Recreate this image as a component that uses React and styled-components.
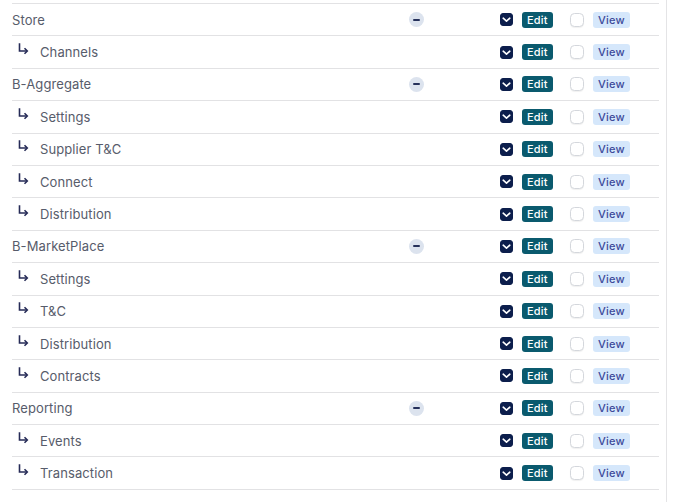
import React from 'react';
import styled, { createGlobalStyle } from 'styled-components';

const sections = [
  { title: 'Store', children: ['Channels'] },
  { title: 'B-Aggregate', children: ['Settings', 'Supplier T&C', 'Connect', 'Distribution'] },
  { title: 'B-MarketPlace', children: ['Settings', 'T&C', 'Distribution', 'Contracts'] },
  { title: 'Reporting', children: ['Events', 'Transaction'] },
];

function ChildArrow() {
  return (
    <StArrow width="11" height="12" viewBox="0 0 11 12" fill="none">
      <path d="M1.5 0.3 V8 H9" stroke="currentColor" strokeWidth="1.6" />
      <path d="M6.5 5.2 L9.3 8 L6.5 10.8" stroke="currentColor" strokeWidth="1.6" fill="none" />
    </StArrow>
  );
}

function CheckMark() {
  return (
    <svg width="9" height="7" viewBox="0 0 9 7" fill="none">
      <path d="M1.2 2.2 L4.5 5.2 L7.8 2.2" stroke="#fff" strokeWidth="1.6" strokeLinecap="round" strokeLinejoin="round" />
    </svg>
  );
}

function PermissionRow({ label, child, collapsible }) {
  return (
    <StRow>
      <StName child={child}>
        {child && <ChildArrow />}
        {label}
      </StName>
      <StToggleCell>{collapsible && <StCollapse />}</StToggleCell>
      <div />
      <StPermCell>
        <StCheckbox checked>
          <CheckMark />
        </StCheckbox>
        <StBadge kind="edit">Edit</StBadge>
      </StPermCell>
      <StPermCell>
        <StCheckbox />
        <StBadge kind="view">View</StBadge>
      </StPermCell>
    </StRow>
  );
}

function App() {
  return (
    <>
      <GlobalStyle />
      <StPanel>
        <StTable>
          {sections.map((section) => (
            <React.Fragment key={section.title}>
              <PermissionRow label={section.title} collapsible />
              {section.children.map((name) => (
                <PermissionRow key={section.title + name} label={name} child />
              ))}
            </React.Fragment>
          ))}
        </StTable>
      </StPanel>
    </>
  );
}

const GlobalStyle = createGlobalStyle`
  body {
    margin: 0;
    background: #fff;
    font-family: Inter, 'Noto Sans', sans-serif;
  }
`;

const StPanel = styled.div`
  width: 667px;
  min-height: 100vh;
  box-sizing: border-box;
  padding: 3px 7px 0 12px;
  border-right: 1px solid #e4e4e6;
`;

const StTable = styled.div`
  border-top: 1px solid #e2e2e4;
`;

const StRow = styled.div`
  display: grid;
  grid-template-columns: 1fr 40px 64px 70px 89px;
  align-items: center;
  height: 31.4px;
  border-bottom: 1px solid #e2e2e4;
`;

const StName = styled.div`
  display: flex;
  align-items: center;
  gap: 11px;
  padding-left: ${(props) => (props.child ? '6px' : '0')};
  font-size: 13px;
  color: #575c6b;
  letter-spacing: 0.1px;
`;

const StArrow = styled.svg`
  color: #262b57;
  margin-top: -6px;
`;

const StToggleCell = styled.div`
  display: flex;
  justify-content: center;
`;

const StCollapse = styled.span`
  position: relative;
  width: 15px;
  height: 15px;
  border-radius: 50%;
  background: #dce3ee;

  &::after {
    content: '';
    position: absolute;
    left: 4px;
    top: 6.5px;
    width: 7px;
    height: 2px;
    border-radius: 1px;
    background: #25305a;
  }
`;

const StPermCell = styled.div`
  display: flex;
  align-items: center;
  gap: 9px;
`;

const StCheckbox = styled.span`
  display: flex;
  align-items: center;
  justify-content: center;
  width: ${(props) => (props.checked ? '13px' : '14px')};
  height: ${(props) => (props.checked ? '13px' : '14px')};
  box-sizing: border-box;
  border-radius: ${(props) => (props.checked ? '3px' : '4.5px')};
  background: ${(props) => (props.checked ? '#0c1e4c' : '#fff')};
  border: 1px solid ${(props) => (props.checked ? '#0c1e4c' : '#d4d7dc')};
  box-shadow: ${(props) => (props.checked ? 'none' : '0 1px 1px rgba(0,0,0,0.06)')};
`;

const StBadge = styled.span`
  display: inline-flex;
  align-items: center;
  height: 16px;
  padding: 0 5px;
  border-radius: 3px;
  font-size: 11px;
  font-weight: 500;
  letter-spacing: 0.2px;
  background: ${(props) => (props.kind === 'edit' ? '#0a5a6e' : '#d5e7fb')};
  color: ${(props) => (props.kind === 'edit' ? '#fff' : '#3d4a9a')};
`;

export default App;
